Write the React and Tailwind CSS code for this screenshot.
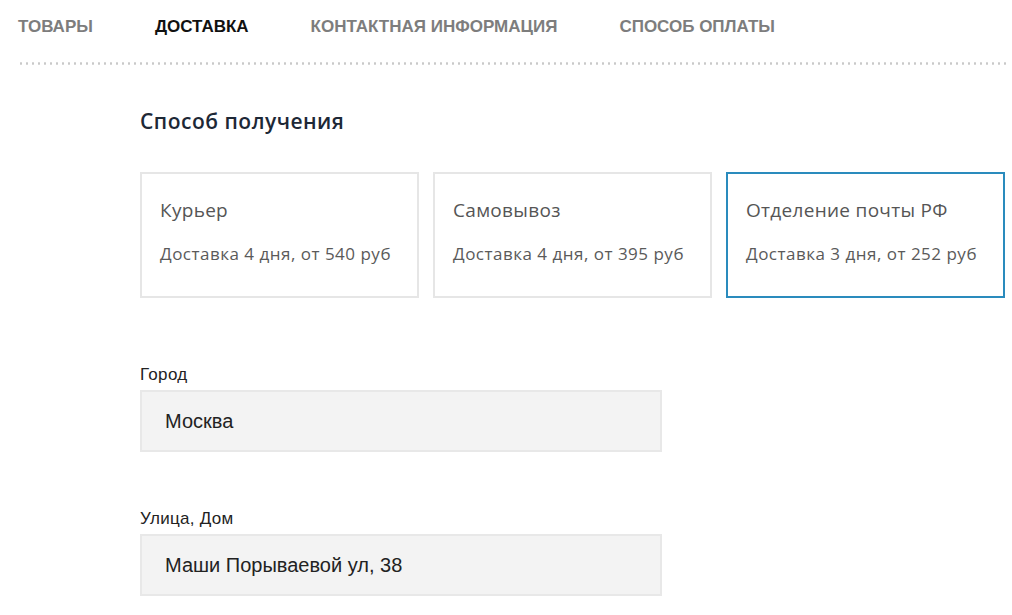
import React from 'react';

const tabs = [
  { label: 'Товары', active: false },
  { label: 'Доставка', active: true },
  { label: 'Контактная информация', active: false },
  { label: 'Способ оплаты', active: false },
];

const methods = [
  { title: 'Курьер', info: 'Доставка 4 дня, от 540 руб', selected: false },
  { title: 'Самовывоз', info: 'Доставка 4 дня, от 395 руб', selected: false },
  { title: 'Отделение почты РФ', info: 'Доставка 3 дня, от 252 руб', selected: true },
];

function Field({ label, value }) {
  return (
    <div className="flex flex-col [font-family:'Liberation_Sans',Arial,sans-serif]">
      <label className="text-[17px] leading-[20px] tracking-[0.3px] text-[#222]">{label}</label>
      <div className="mt-[5px] w-[522px] h-[62px] bg-[#f3f3f3] border-2 border-[#e8e8e8] flex items-center pl-[23px] text-[20px] text-[#222]">
        {value}
      </div>
    </div>
  );
}

export default function App() {
  return (
    <div className="w-[1012px] h-[615px] overflow-hidden bg-white [font-family:'Open_Sans',sans-serif]">
      <nav className="flex gap-[62px] pl-[18px] pt-[17px] uppercase text-[17px] leading-[20px] font-bold [font-family:'Liberation_Sans',Arial,sans-serif]">
        {tabs.map((t) => (
          <span key={t.label} className={t.active ? 'text-[#111]' : 'text-[#7d7d7d]'}>
            {t.label}
          </span>
        ))}
      </nav>

      <div className="ml-[18px] mr-[2px] mt-[25px] h-[3px] bg-[radial-gradient(circle,#c9c9c9_1px,transparent_1.4px)] bg-[length:6px_3px]" />

      <div className="pl-[140px]">
        <h2 className="mt-[43px] text-[21px] leading-[26px] font-semibold tracking-[0.5px] text-[#1d2836]">Способ получения</h2>

        <div className="mt-[38px] flex gap-[14px]">
          {methods.map((m) => (
            <div
              key={m.title}
              className={
                'w-[279px] h-[126px] border-2 pl-[18px] pt-[22px] ' +
                (m.selected ? 'border-[#2a8bbd]' : 'border-[#e6e6e6]')
              }
            >
              <div className="text-[19px] leading-[28px] tracking-[0.3px] text-[#555]">{m.title}</div>
              <div className="mt-[19px] text-[17px] leading-[22px] tracking-[0.5px] text-[#5a5a5a]">{m.info}</div>
            </div>
          ))}
        </div>

        <div className="mt-[67px] flex flex-col gap-[57px]">
          <Field label="Город" value="Москва" />
          <Field label="Улица, Дом" value="Маши Порываевой ул, 38" />
        </div>
      </div>
    </div>
  );
}
